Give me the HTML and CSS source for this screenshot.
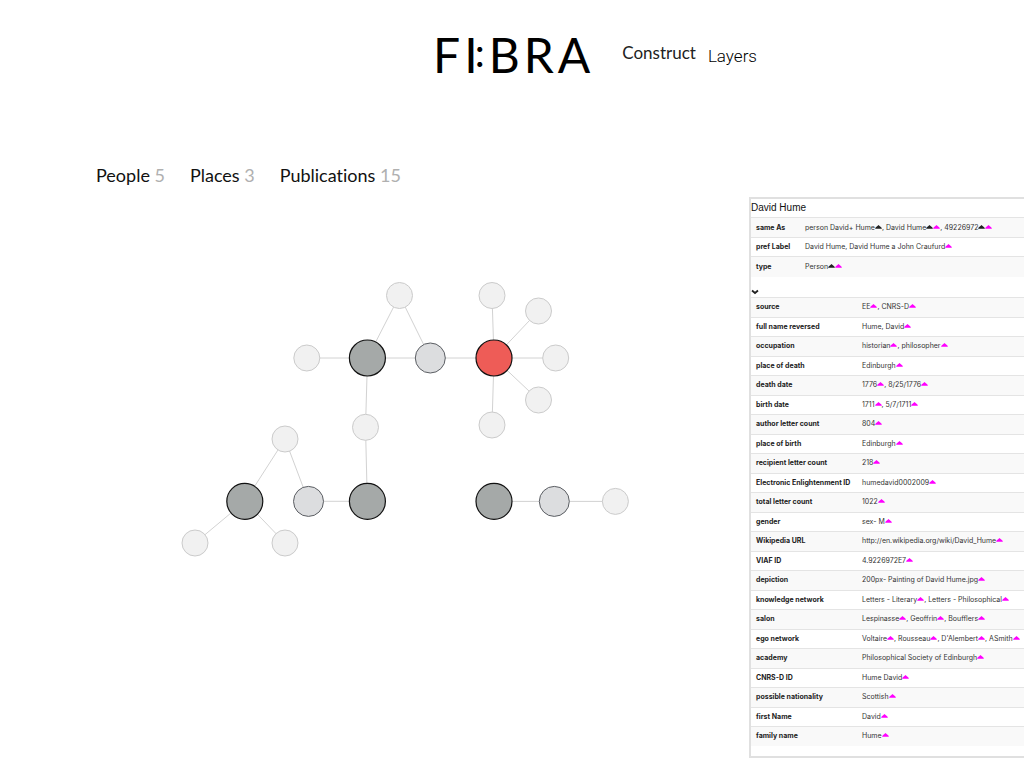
FILE: index.html
```
<!DOCTYPE html>
<html lang="en">
<head>
<meta charset="utf-8">
<title>FI:BRA</title>
<link rel="stylesheet" href="styles.css">
</head>
<body>
<svg class="defs" aria-hidden="true">
  <symbol id="m" viewBox="0 0 7 4"><path d="M3.5 0 L4.9 1.2 Q6.9 2.3 6.9 3.7 L0.1 3.7 Q0.1 2.3 2.1 1.2 Z" fill="currentColor"/></symbol>
</svg>
<header class="header">
  <h1 class="logo"><span>F</span><span class="colon-group"><span>I</span><span class="colon">:</span></span><span>B</span><span>R</span><span>A</span></h1>
  <nav class="nav">
    <a class="nav-link" href="#construct">Construct</a>
    <a class="nav-link nav-layers" href="#layers">Layers</a>
  </nav>
</header>
<main class="main">
  <section class="workspace">
    <nav class="tabs">
      <a href="#people">People <span class="count">5</span></a>
      <a href="#places">Places <span class="count">3</span></a>
      <a href="#publications">Publications <span class="count">15</span></a>
    </nav>
    <svg class="graph" viewBox="180 270 450 290" role="img" aria-label="Network of people, places and publications">
      <g class="edges">
        <path d="M307 358H555.7M399.5 295.5L367.5 358M399.5 295.5L430.3 358M494 358L492 295.5M494 358L538.5 311M494 358L538.5 400M494 358L492 425M367.5 358L365.5 427.3L367.3 501.3H308.5L285 439L245 501.3L195 543M245 501.3L285 543M494 501.4H615.5"/>
      </g>
      <g class="leaf">
        <circle cx="399.5" cy="295.5" r="13"/><circle cx="306.8" cy="358" r="13"/>
        <circle cx="492" cy="295.5" r="13"/><circle cx="538.5" cy="311" r="13"/>
        <circle cx="555.7" cy="358" r="13"/><circle cx="538.5" cy="400" r="13"/>
        <circle cx="492" cy="425" r="13"/><circle cx="365.5" cy="427.3" r="13"/>
        <circle cx="285" cy="439" r="13"/><circle cx="195" cy="543" r="13"/>
        <circle cx="285" cy="543" r="13"/><circle cx="615.4" cy="501.4" r="13"/>
      </g>
      <g class="link-node">
        <circle cx="430.3" cy="358" r="15"/><circle cx="308.5" cy="501.4" r="15"/><circle cx="554.3" cy="501.4" r="15"/>
      </g>
      <g class="hub">
        <circle cx="367.4" cy="358" r="18"/><circle class="selected" cx="494" cy="358" r="18"/>
        <circle cx="244.8" cy="501.4" r="18"/><circle cx="367.4" cy="501.4" r="18"/><circle cx="494" cy="501.4" r="18"/>
      </g>
    </svg>
  </section>
  <aside class="panel">
    <h2 class="panel-title">David Hume</h2>
    <table class="facts summary">
      <tr><th scope="row">same As</th><td>person David+ Hume<svg class="mk dark"><use href="#m"/></svg>, David Hume<svg class="mk dark"><use href="#m"/></svg><svg class="mk"><use href="#m"/></svg>, 49226972<svg class="mk dark"><use href="#m"/></svg><svg class="mk"><use href="#m"/></svg></td></tr>
      <tr><th scope="row">pref Label</th><td>David Hume, David Hume a John Craufurd<svg class="mk"><use href="#m"/></svg></td></tr>
      <tr><th scope="row">type</th><td>Person<svg class="mk dark"><use href="#m"/></svg><svg class="mk"><use href="#m"/></svg></td></tr>
    </table>
    <button class="toggle" type="button" aria-label="Show details" aria-expanded="true"><svg viewBox="0 0 8 6"><path d="M1 1.5L4 4L7 1.5"/></svg></button>
    <table class="facts details">
      <tr><th scope="row">source</th><td>EE<svg class="mk"><use href="#m"/></svg>, CNRS-D<svg class="mk"><use href="#m"/></svg></td></tr>
      <tr><th scope="row">full name reversed</th><td>Hume, David<svg class="mk"><use href="#m"/></svg></td></tr>
      <tr><th scope="row">occupation</th><td>historian<svg class="mk"><use href="#m"/></svg>, philosopher<svg class="mk"><use href="#m"/></svg></td></tr>
      <tr><th scope="row">place of death</th><td>Edinburgh<svg class="mk"><use href="#m"/></svg></td></tr>
      <tr><th scope="row">death date</th><td>1776<svg class="mk"><use href="#m"/></svg>, 8/25/1776<svg class="mk"><use href="#m"/></svg></td></tr>
      <tr><th scope="row">birth date</th><td>1711<svg class="mk"><use href="#m"/></svg>, 5/7/1711<svg class="mk"><use href="#m"/></svg></td></tr>
      <tr><th scope="row">author letter count</th><td>804<svg class="mk"><use href="#m"/></svg></td></tr>
      <tr><th scope="row">place of birth</th><td>Edinburgh<svg class="mk"><use href="#m"/></svg></td></tr>
      <tr><th scope="row">recipient letter count</th><td>218<svg class="mk"><use href="#m"/></svg></td></tr>
      <tr><th scope="row">Electronic Enlightenment ID</th><td>humedavid0002009<svg class="mk"><use href="#m"/></svg></td></tr>
      <tr><th scope="row">total letter count</th><td>1022<svg class="mk"><use href="#m"/></svg></td></tr>
      <tr><th scope="row">gender</th><td>sex- M<svg class="mk"><use href="#m"/></svg></td></tr>
      <tr><th scope="row">Wikipedia URL</th><td>http://en.wikipedia.org/wiki/David_Hume<svg class="mk"><use href="#m"/></svg></td></tr>
      <tr><th scope="row">VIAF ID</th><td>4.9226972E7<svg class="mk"><use href="#m"/></svg></td></tr>
      <tr><th scope="row">depiction</th><td>200px- Painting of David Hume.jpg<svg class="mk"><use href="#m"/></svg></td></tr>
      <tr><th scope="row">knowledge network</th><td>Letters - Literary<svg class="mk"><use href="#m"/></svg>, Letters - Philosophical<svg class="mk"><use href="#m"/></svg></td></tr>
      <tr><th scope="row">salon</th><td>Lespinasse<svg class="mk"><use href="#m"/></svg>, Geoffrin<svg class="mk"><use href="#m"/></svg>, Boufflers<svg class="mk"><use href="#m"/></svg></td></tr>
      <tr><th scope="row">ego network</th><td>Voltaire<svg class="mk"><use href="#m"/></svg>, Rousseau<svg class="mk"><use href="#m"/></svg>, D'Alembert<svg class="mk"><use href="#m"/></svg>, ASmith<svg class="mk"><use href="#m"/></svg></td></tr>
      <tr><th scope="row">academy</th><td>Philosophical Society of Edinburgh<svg class="mk"><use href="#m"/></svg></td></tr>
      <tr><th scope="row">CNRS-D ID</th><td>Hume David<svg class="mk"><use href="#m"/></svg></td></tr>
      <tr><th scope="row">possible nationality</th><td>Scottish<svg class="mk"><use href="#m"/></svg></td></tr>
      <tr><th scope="row">first Name</th><td>David<svg class="mk"><use href="#m"/></svg></td></tr>
      <tr><th scope="row">family name</th><td>Hume<svg class="mk"><use href="#m"/></svg></td></tr>
    </table>
  </aside>
</main>
</body>
</html>
```
FILE: styles.css
```
* { box-sizing: border-box; }
body { margin: 0; background: #fff; color: #000; font-family: Lato, sans-serif; font-variant-ligatures: none; }
a { color: inherit; text-decoration: none; }
.defs { display: none; }

.header { display: flex; justify-content: center; gap: 32px; padding: 26px 0 0 166px; }
.logo { display: flex; gap: 4px; margin: 0; font-size: 48px; line-height: 58px; font-weight: 400; }
.colon-group { display: flex; align-items: center; }
.colon { margin-left: -3px; padding-bottom: 6px; font-size: 40px; line-height: 48px; }
.nav { display: flex; align-items: flex-start; gap: 12px; padding-top: 16px; font-size: 17px; line-height: 22px; }
.nav-link { color: #222; }
.nav-layers { padding-top: 3px; font-family: Roboto, sans-serif; font-weight: 300; color: #000; }

.main { display: grid; grid-template-columns: minmax(0, 1fr) 275px; padding-top: 80px; }
.workspace { padding-left: 96px; }
.tabs { display: flex; gap: 25px; font-size: 18px; line-height: 22px; white-space: nowrap; color: #111; }
.count { color: #b0b0b0; }
.graph { display: block; width: 450px; max-width: 100%; margin: 84px 0 0 84px; }
.edges { fill: none; stroke: #d2d2d2; stroke-width: 1; }
.leaf { fill: #f1f1f1; stroke: #cbcbcb; stroke-width: 1; }
.link-node { fill: #dcdddf; stroke: #5b5e63; stroke-width: 1; }
.hub { fill: #a5a9a8; stroke: #111; stroke-width: 1.2; }
.selected { fill: #ee5c57; }

.panel { margin-top: 33px; padding-bottom: 10px; border: 2px solid #e0e0e0; border-right: 0; font-family: Inter, sans-serif; color: #333; }
.panel-title { margin: 0; font-family: "Liberation Sans", sans-serif; font-size: 10px; line-height: 18px; font-weight: 400; color: #111; }
.facts { width: 100%; border-collapse: collapse; table-layout: fixed; font-size: 7px; line-height: 10px; white-space: nowrap; }
.facts th, .facts td { height: 20px; padding: 0; border-top: 1px solid #e4e4e4; text-align: left; }
.facts tr:nth-child(even) th, .facts tr:nth-child(even) td { height: 19px; }
.facts tr:nth-child(odd) { background: #f9f9f9; }
.facts th { padding-left: 5px; font-weight: 700; color: #222; }
.summary th { width: 54px; }
.details th { width: 111px; }
.mk { width: 7px; height: 4px; color: #f0f; vertical-align: 1px; }
.dark { color: #222; }
.toggle { display: block; width: 8px; height: 6px; margin: 12px 0 2px; padding: 0; border: 0; background: none; }
.toggle svg { display: block; width: 8px; height: 6px; fill: none; stroke: #222; stroke-width: 1.8; }
```
